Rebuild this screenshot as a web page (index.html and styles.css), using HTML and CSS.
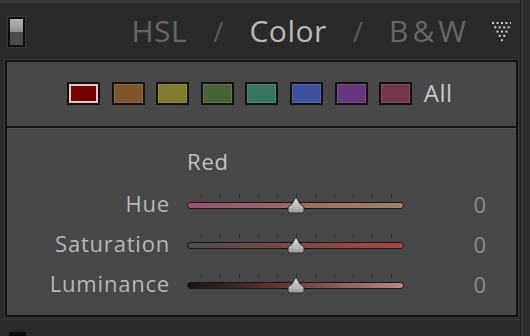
FILE: index.html
```html
<!DOCTYPE html>
<html>
<head>
<meta charset="utf-8">
<link rel="stylesheet" href="styles.css">
</head>
<body>
<div class="frame">
  <div class="main">
    <div class="topline"></div>
    <header class="head">
      <div class="toggle"><span class="toggle-top"></span><span class="toggle-bot"></span></div>
      <nav class="tabs">
        <span class="tab">HSL</span>
        <span class="sep">/</span>
        <span class="tab active">Color</span>
        <span class="sep">/</span>
        <span class="tab bw">B&amp;W</span>
      </nav>
      <svg class="tri" width="20" height="22" viewBox="0 0 20 22">
        <g fill="#c9c9c9">
          <rect x="1" y="1" width="2" height="2"/><rect x="5.5" y="1" width="2" height="2"/><rect x="10" y="1" width="2" height="2"/><rect x="14.5" y="1" width="2" height="2"/><rect x="19" y="1" width="1" height="2"/>
          <rect x="3.2" y="5.3" width="2" height="2"/><rect x="7.7" y="5.3" width="2" height="2"/><rect x="12.2" y="5.3" width="2" height="2"/><rect x="16.7" y="5.3" width="2" height="2"/>
          <rect x="5.5" y="9.6" width="2" height="2"/><rect x="10" y="9.6" width="2" height="2"/><rect x="14.5" y="9.6" width="2" height="2"/>
          <rect x="7.7" y="13.9" width="2" height="2"/><rect x="12.2" y="13.9" width="2" height="2"/>
          <rect x="10" y="18.2" width="2" height="2"/>
        </g>
      </svg>
    </header>
    <section class="panel">
      <div class="swatches">
        <span class="sw selected" style="background:#760303"></span>
        <span class="sw" style="background:#80552c"></span>
        <span class="sw" style="background:#7f7d2c"></span>
        <span class="sw" style="background:#4a6238"></span>
        <span class="sw" style="background:#3a7463"></span>
        <span class="sw" style="background:#3f4f9e"></span>
        <span class="sw" style="background:#66367f"></span>
        <span class="sw" style="background:#74384d"></span>
        <span class="all">All</span>
      </div>
      <div class="adjust">
        <div class="title">Red</div>
        <div class="row">
          <span class="label">Hue</span>
          <div class="slider">
            <div class="ticks"><i></i><i></i><i></i><i></i><i></i><i></i><i></i><i></i><i></i><i></i><i></i></div>
            <div class="track hue"></div>
            <svg class="thumb" width="20" height="18" viewBox="0 0 20 18"><defs><linearGradient id="g1" x1="0" y1="0" x2="0" y2="1"><stop offset="0" stop-color="#e6e6e6"/><stop offset="1" stop-color="#9a9a9a"/></linearGradient></defs><path d="M10 1 L14 8 L18 11 L18 16 L16 17 L4 17 L2 16 L2 11 L6 8 Z" fill="url(#g1)" stroke="#2a2a2a" stroke-width="1"/></svg>
          </div>
          <span class="value">0</span>
        </div>
        <div class="row">
          <span class="label">Saturation</span>
          <div class="slider">
            <div class="ticks"><i></i><i></i><i></i><i></i><i></i><i></i><i></i><i></i><i></i><i></i><i></i></div>
            <div class="track sat"></div>
            <svg class="thumb" width="20" height="18" viewBox="0 0 20 18"><path d="M10 1 L14 8 L18 11 L18 16 L16 17 L4 17 L2 16 L2 11 L6 8 Z" fill="url(#g1)" stroke="#2a2a2a" stroke-width="1"/></svg>
          </div>
          <span class="value">0</span>
        </div>
        <div class="row">
          <span class="label">Luminance</span>
          <div class="slider">
            <div class="ticks"><i></i><i></i><i></i><i></i><i></i><i></i><i></i><i></i><i></i><i></i><i></i></div>
            <div class="track lum"></div>
            <svg class="thumb" width="20" height="18" viewBox="0 0 20 18"><path d="M10 1 L14 8 L18 11 L18 16 L16 17 L4 17 L2 16 L2 11 L6 8 Z" fill="url(#g1)" stroke="#2a2a2a" stroke-width="1"/></svg>
          </div>
          <span class="value">0</span>
        </div>
      </div>
    </section>
    <div class="next"><span class="next-toggle"></span></div>
  </div>
  <div class="rail"></div>
</div>
</body>
</html>
```

FILE: styles.css
```css
* { box-sizing: border-box; }
html, body { margin: 0; padding: 0; }
body {
  width: 530px;
  height: 336px;
  overflow: hidden;
  background: #2a2a2a;
  font-family: "Open Sans", "DejaVu Sans", sans-serif;
}
.frame { display: flex; width: 530px; height: 336px; }
.main { width: 520px; display: flex; flex-direction: column; }
.rail {
  width: 10px;
  border-left: 1px solid #1c1c1c;
  background: linear-gradient(90deg, #3a3a3a 0, #3a3a3a 2px, #2e2e2e 2px);
}
.topline { height: 3px; background: #393939; }
.head {
  height: 56px;
  display: flex;
  align-items: center;
  padding-left: 8px;
}
.toggle {
  width: 17px;
  height: 30px;
  border: 2px solid #0d0d0d;
  display: flex;
  flex-direction: column;
  margin-top: 3px;
  box-shadow: 0 0 0 1px #3a3a3a;
}
.toggle-top { flex: 1; background: linear-gradient(#b5b5b5, #8e8e8e); }
.toggle-bot { flex: 1; background: #4b4b4b; }
.tabs {
  margin-left: auto;
  display: flex;
  align-items: center;
  gap: 26px;
  font-size: 30px;
  color: #676767;
  line-height: 1;
  margin-top: 0;
}
.tab { letter-spacing: 0.5px; }
.tab.active { color: #b9b9b9; }
.sep { color: #595959; font-size: 28px; }
.tab.bw { letter-spacing: 4px; margin-right: -4px; }
.tri { margin-left: 25px; margin-right: 9px; margin-top: 2px; }
.panel {
  margin-left: 5px;
  margin-top: 1px;
  width: 513px;
  height: 259px;
  border: 2px solid #121212;
  background: #484848;
  box-shadow: 0 0 0 1px #3a3a3a;
  display: flex;
  flex-direction: column;
}
.swatches {
  height: 66px;
  display: flex;
  align-items: center;
  padding-left: 60px;
  gap: 11.6px;
  border-bottom: 2px solid #151515;
}
.sw {
  width: 33px;
  height: 23px;
  border: 2px solid #101010;
  box-shadow: inset 0 0 0 1px rgba(255,255,255,0.12);
}
.sw.selected { box-shadow: inset 0 0 0 2px #e6c6c6; }
.all { color: #c8c8c8; font-size: 24px; line-height: 1; margin-left: 0; margin-top: -1px; letter-spacing: 0.5px; }
.adjust {
  flex: 1;
  border-top: 1px solid #565656;
  padding-top: 17px;
}
.title {
  height: 30px;
  line-height: 30px;
  font-size: 22px;
  letter-spacing: 0.8px;
  color: #c2c2c2;
  padding-left: 180px;
  margin-bottom: 7px;
}
.row {
  height: 40px;
  display: flex;
  align-items: center;
}
.label {
  width: 163px;
  text-align: right;
  font-size: 22px;
  letter-spacing: 0.8px;
  color: #b7b7b7;
  line-height: 1;
}
.slider {
  position: relative;
  width: 217px;
  height: 40px;
  margin-left: 17px;
  padding-top: 11px;
}
.ticks {
  height: 4px;
  display: flex;
  justify-content: space-between;
  padding: 0 12px 0 14px;
}
.ticks i { width: 1px; height: 4px; background: #2c2c2c; }
.track {
  margin-top: 4px;
  height: 7px;
  border-radius: 4px;
  border: 1px solid #161616;
}
.track.hue { background: linear-gradient(90deg, #9c5070, #9c6868 45%, #9c8860); }
.track.sat { background: linear-gradient(90deg, #4e4e4e, #784848 45%, #ae4646); }
.track.lum { background: linear-gradient(90deg, #141414, #683a3a 45%, #bc8686); }
.thumb { position: absolute; left: 99px; top: 13px; }
.value {
  width: 82px;
  text-align: right;
  font-size: 22px;
  color: #8d8d8d;
  line-height: 1;
  padding-top: 2px;
}
.next { height: 17px; border-top: 1px solid #3a3a3a; margin-top: 2px; padding-left: 9px; padding-top: 12px; }
.next-toggle { display: block; width: 17px; height: 4px; background: #0d0d0d; }
```
